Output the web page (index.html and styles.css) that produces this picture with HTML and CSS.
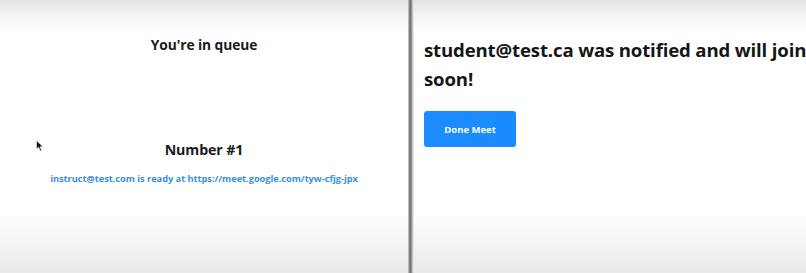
FILE: index.html
```html
<!DOCTYPE html>
<html>
<head>
<meta charset="utf-8">
<link rel="stylesheet" href="styles.css">
</head>
<body>
<div class="screen">
  <section class="pane pane-left">
    <h2 class="queue-title">You're in queue</h2>
    <h2 class="queue-number">Number #1</h2>
    <p class="queue-link">instruct@test.com is ready at https://meet.google.com/tyw-cfjg-jpx</p>
    <svg class="cursor" width="8" height="12" viewBox="0 0 8 12"><path d="M0.5 0.5 L0.5 9 L2.6 7.2 L4.2 11 L5.6 10.4 L4 6.8 L7 6.8 Z" fill="#111" stroke="#fff" stroke-width="0.6"/></svg>
  </section>
  <div class="divider"></div>
  <section class="pane pane-right">
    <h1 class="notice">student@test.ca was notified and will join soon!</h1>
    <button class="done-btn">Done Meet</button>
  </section>
</div>
</body>
</html>
```

FILE: styles.css
```css
html, body {
  margin: 0;
  padding: 0;
  height: 100%;
  overflow: hidden;
}
body {
  font-family: "Open Sans", "Noto Sans", sans-serif;
  color: #1a1a1a;
}
.screen {
  display: grid;
  grid-template-columns: 408px 6px 1fr;
  height: 273px;
  width: 806px;
}
.pane {
  background: linear-gradient(to bottom, #e4e4e4 0px, #f6f6f6 18px, #ffffff 34px, #ffffff 212px, #f5f5f5 240px, #e9e9e9 273px);
  position: relative;
  overflow: hidden;
}
.pane-left {
  display: flex;
  flex-direction: column;
  align-items: center;
}
.queue-title {
  margin: 35px 0 0 0;
  font-size: 13.8px;
  font-weight: 700;
  line-height: 20px;
  letter-spacing: -0.1px;
}
.queue-number {
  margin: 84px 0 0 0;
  font-size: 14.2px;
  font-weight: 700;
  line-height: 22px;
  letter-spacing: -0.1px;
}
.queue-link {
  margin: 11px 0 0 0;
  font-size: 9.3px;
  font-weight: 700;
  color: #3a8fe3;
  line-height: 14px;
  white-space: nowrap;
  letter-spacing: -0.05px;
}
.cursor {
  position: absolute;
  left: 36px;
  top: 140px;
}
.divider {
  background: linear-gradient(to right, #d8d8d8 0, #9a9a9a 1px, #6e6e6e 2px, #7c7c7c 3px, #a8a8a8 4px, #e4e4e4 5px);
}
.pane-right {
  padding: 35px 0 0 10px;
}
.notice {
  margin: 0;
  width: 385px;
  font-size: 18.6px;
  font-weight: 700;
  line-height: 29px;
  letter-spacing: -0.15px;
  color: #161616;
}
.done-btn {
  margin-top: 18px;
  width: 92px;
  height: 36px;
  border: none;
  border-radius: 3px;
  background: #1a8cff;
  color: #fff;
  font-family: "Open Sans", "Noto Sans", sans-serif;
  font-size: 9.5px;
  font-weight: 700;
  cursor: pointer;
}
```
